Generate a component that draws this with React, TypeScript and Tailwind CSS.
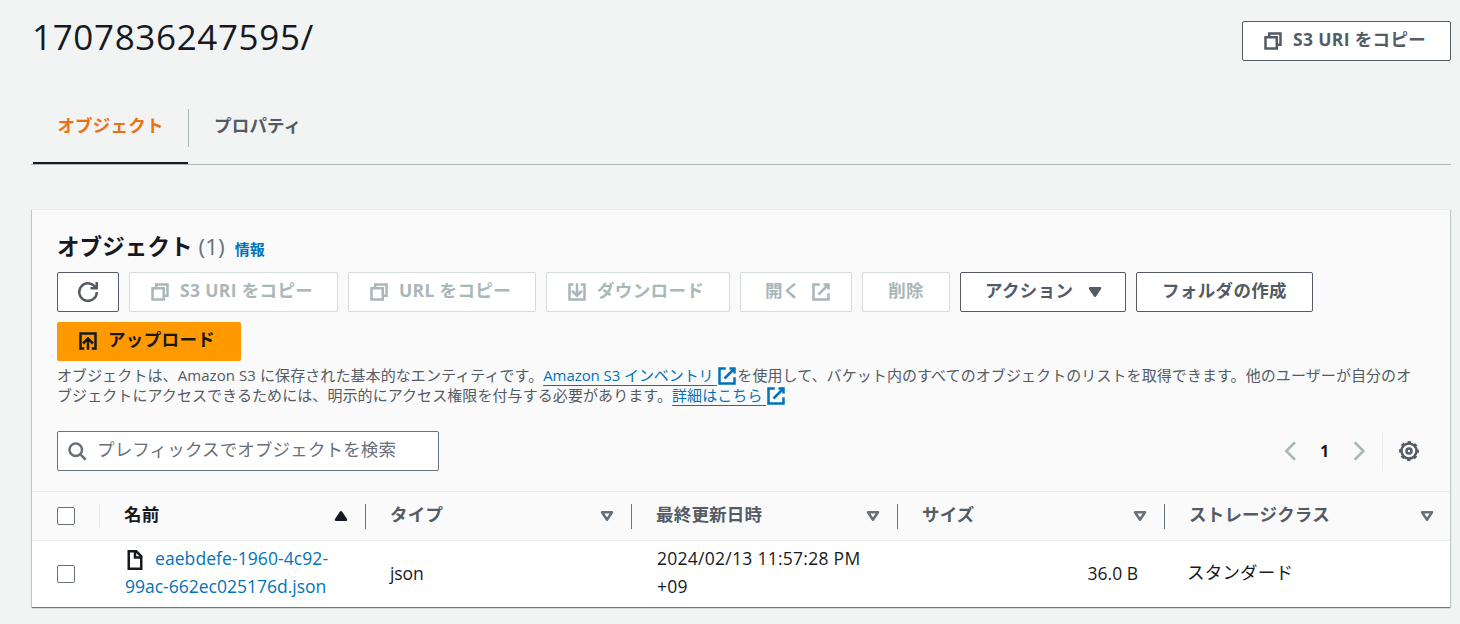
import type { ReactNode } from "react";

interface IconProps {
  children: ReactNode;
  className?: string;
}

interface ButtonProps {
  children: ReactNode;
  layout: string;
  disabled?: boolean;
}

function Icon({ children, className = "" }: IconProps) {
  return (
    <svg
      viewBox="0 0 16 16"
      fill="none"
      stroke="currentColor"
      strokeWidth="2"
      className={`size-5 shrink-0 ${className}`}
    >
      {children}
    </svg>
  );
}

function CopyIcon() {
  return (
    <Icon>
      <path d="M2 5h9v9H2z" />
      <path d="M5 5V2h9v9h-3" />
    </Icon>
  );
}

function ExternalIcon({ className }: { className?: string }) {
  return (
    <Icon className={className}>
      <path d="M10 2h4v4" />
      <path d="m6 10 8-8" />
      <path d="M14 9v5H2V2h5" />
    </Icon>
  );
}

function SortIcon() {
  return (
    <Icon className="text-[#687078]">
      <path d="M4 5h8l-4 6z" strokeLinejoin="round" />
    </Icon>
  );
}

function Button({ children, layout, disabled }: ButtonProps) {
  return (
    <button
      type="button"
      className={`flex h-10 items-center rounded-[2px] border bg-white font-bold tracking-[0.35px] whitespace-nowrap ${layout} ${
        disabled
          ? "border-[#d5dbdb] text-[#aab7b8]"
          : "border-[#545b64] text-[#545b64]"
      }`}
    >
      {children}
    </button>
  );
}

const columns = [
  { title: "タイプ", width: "w-[266px]" },
  { title: "最終更新日時", width: "w-[266px]" },
  { title: "サイズ", width: "w-[267px]" },
  { title: "ストレージクラス", width: "w-[286px]" },
];

export default function App() {
  return (
    <div className="h-[624px] overflow-hidden bg-[#f2f3f3] pr-[9px] pl-[31px] font-['Open_Sans','Noto_Sans_CJK_JP',sans-serif] text-[17.5px] leading-[27.5px] text-[#16191f]">
      <header className="flex h-[109px] justify-between pt-[21px]">
        <h1 className="pl-px text-[35px] leading-8 tracking-[0.65px]">
          1707836247595/
        </h1>
        <Button layout="w-[209px] gap-[10px] pl-[20px]">
          <CopyIcon />
          <span className="pb-[3px]">S3 URI をコピー</span>
        </Button>
      </header>

      <nav className="flex h-14 border-b border-[#aab7b8] pl-[2px] font-bold tracking-[0.2px]">
        <div className="h-[55px] w-[155px] border-b-2 border-[#16191f] pt-[3px] text-center text-[#ec7211]">
          オブジェクト
        </div>
        <div className="h-[38px] border-l border-[#aab7b8] pt-[3px] pl-[25px] text-[#545b64]">
          プロパティ
        </div>
      </nav>

      <section className="mt-11 mr-px ml-px h-[398px] border-t border-[#eaeded] bg-[#fafafa] shadow-[0_1px_1px_0_rgba(0,28,36,0.4),1px_1px_1px_0_rgba(0,28,36,0.15),-1px_1px_1px_0_rgba(0,28,36,0.15)]">
        <div className="px-[25px] pt-[21px]">
          <div className="flex h-[41px] items-baseline">
            <h2 className="text-[22.5px] leading-[32px] font-bold tracking-[0.1px]">
              オブジェクト
            </h2>
            <span className="ml-[6px] text-[22.5px] text-[#687078]">(1)</span>
            <a className="ml-[10px] text-[15px] font-bold text-[#0073bb]">
              情報
            </a>
          </div>

          <div className="flex flex-wrap gap-[10px]">
            <Button layout="w-[62px] justify-center">
              <Icon>
                <path d="M10 5h5V0" />
                <path d="M15 8a7 7 0 1 1-.7-3" />
              </Icon>
            </Button>
            <Button layout="w-[209px] gap-[10px] pl-[20px]" disabled>
              <CopyIcon />
              <span className="pb-[3px]">S3 URI をコピー</span>
            </Button>
            <Button layout="w-[188px] gap-[10px] pl-[20px]" disabled>
              <CopyIcon />
              <span className="pb-[3px]">URL をコピー</span>
            </Button>
            <Button layout="w-[184px] gap-[10px] pl-[20px]" disabled>
              <Icon>
                <path d="M5 2H2v12h12V2h-3" />
                <path d="M8 1v10M4 7l4 4 4-4" />
              </Icon>
              <span className="pb-[3px]">ダウンロード</span>
            </Button>
            <Button layout="w-[112px] justify-between pr-[20px] pl-[24px]" disabled>
              <span className="pb-[3px]">開く</span>
              <ExternalIcon />
            </Button>
            <Button layout="w-[88px] justify-center" disabled>
              <span className="pb-[3px]">削除</span>
            </Button>
            <Button layout="w-[166px] justify-between pr-[20px] pl-[24px]">
              <span className="pb-[3px]">アクション</span>
              <Icon>
                <path d="M4 5h8l-4 6z" fill="currentColor" strokeLinejoin="round" />
              </Icon>
            </Button>
            <Button layout="w-[177px] justify-center">
              <span className="pb-[3px]">フォルダの作成</span>
            </Button>
            <button
              type="button"
              className="mr-[600px] flex h-[39px] w-[184px] items-center gap-[10px] rounded-[2px] bg-[#ff9900] pb-px pl-[21px] font-bold tracking-[0.35px]"
            >
              <Icon>
                <path d="M5 14H2V2h12v12h-3" />
                <path d="M8 15V6M4 10l4-4 4 4" />
              </Icon>
              <span className="pb-[2px]">アップロード</span>
            </button>
          </div>

          <p className="mt-[4px] h-[41px] text-[15px] leading-5 tracking-[0.08px] whitespace-nowrap text-[#545b64]">
            オブジェクトは、Amazon S3 に保存された基本的なエンティティです。
            <a className="border-b border-[#0073bb] tracking-[-0.08px] text-[#0073bb]">
              Amazon S3 インベントリ{" "}
            </a>
            <ExternalIcon className="inline translate-y-px align-top text-[#0073bb]" />
            を使用して、バケット内のすべてのオブジェクトのリストを取得できます。他のユーザーが自分のオ
            <br />
            ブジェクトにアクセスできるためには、明示的にアクセス権限を付与する必要があります。
            <a className="border-b border-[#0073bb] text-[#0073bb]">
              詳細はこちら{" "}
            </a>
            <ExternalIcon className="inline translate-y-px align-top text-[#0073bb]" />
          </p>

          <div className="mt-[25px] flex items-center">
            <div className="flex h-10 w-[382px] items-center rounded-[2px] border border-[#687078] bg-white pl-[9px] text-[#687078]">
              <Icon>
                <circle cx="7" cy="7" r="5" />
                <path d="m15 15-4.5-4.5" />
              </Icon>
              <span className="ml-[10px] pb-[2px] tracking-[0.15px]">
                プレフィックスでオブジェクトを検索
              </span>
            </div>
            <div className="ml-auto flex h-10 items-center">
              <Icon className="text-[#aab7b8]">
                <path d="M12 1 5 8l7 7" />
              </Icon>
              <span className="w-[49px] text-center text-base font-bold">1</span>
              <Icon className="text-[#aab7b8]">
                <path d="m4.500 1 7 7-7 7" />
              </Icon>
              <span className="mr-4 ml-[13px] h-10 border-l border-[#eaeded]" />
              <Icon className="mr-[6px] text-[#545b64]">
                <circle cx="8" cy="8" r="2" />
                <circle cx="8" cy="8" r="6" />
                <circle
                  cx="8"
                  cy="8"
                  r="7.2"
                  strokeWidth="1.5"
                  strokeDasharray="2.83 2.825"
                  strokeDashoffset="1.41"
                />
              </Icon>
            </div>
          </div>
        </div>

        <div className="mt-5 flex h-[50px] items-center border-y border-[#eaeded] font-bold tracking-[0.2px] text-[#545b64]">
          <div className="flex h-[25px] w-[68px] items-center border-r border-[#eaeded] pl-[25px]">
            <span className="size-[18px] rounded-[2px] border border-[#687078] bg-white" />
          </div>
          <div className="flex w-[265px] items-center justify-between pr-[14px] pl-[24px] text-[#16191f]">
            <span className="pb-[3px]">名前</span>
            <Icon>
              <path d="M4 11h8L8 5z" fill="currentColor" strokeLinejoin="round" />
            </Icon>
          </div>
          {columns.map((column) => (
            <div
              key={column.title}
              className={`flex h-[25px] items-center justify-between border-l border-[#687078] pr-[14px] pl-[24px] last:pr-[13px] ${column.width}`}
            >
              <span className="pb-[3px]">{column.title}</span>
              <SortIcon />
            </div>
          ))}
        </div>

        <div className="flex h-[66px] items-center bg-white leading-7">
          <div className="w-[93px] pl-[25px]">
            <span className="block size-[18px] rounded-[2px] border border-[#687078]" />
          </div>
          <div className="w-[265px] pb-[4px] text-[#0073bb]">
            <Icon className="mr-[10px] inline text-[#16191f]">
              <path d="M3 1h6l4 4v10H3z" />
              <path d="M8 1v5h5" />
            </Icon>
            <span className="tracking-[0.08px]">eaebdefe-1960-4c92-</span>
            <br />
            99ac-662ec025176d.json
          </div>
          <div className="w-[267px] pb-[2px] tracking-[-0.1px]">json</div>
          <div className="w-[266px] pb-[4px] tracking-[0.27px]">
            2024/02/13 11:57:28 PM
            <br />
            +09
          </div>
          <div className="w-[215px] pb-[2px] text-right">36.0 B</div>
          <div className="ml-[49px] pb-[4px] tracking-[0.2px]">スタンダード</div>
        </div>
      </section>
    </div>
  );
}
